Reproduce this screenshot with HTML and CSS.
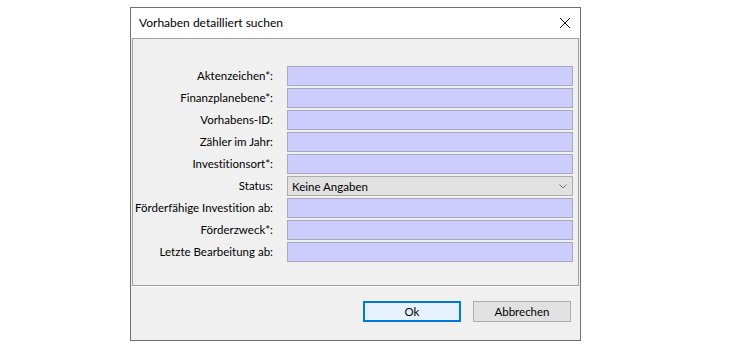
FILE: index.html
```html
<!DOCTYPE html>
<html lang="de">
<head>
    <meta charset="UTF-8">
    <title>Vorhaben detailliert suchen</title>
    <link rel="stylesheet" href="styles.css">
</head>
<body>

<div class="dialog">
    <div class="title-bar">
        <span class="title">Vorhaben detailliert suchen</span>
        <svg class="close" width="12" height="12" viewBox="0 0 12 12">
            <path d="M1 1 L11 11 M11 1 L1 11" stroke="#111" stroke-width="1" fill="none"/>
        </svg>
    </div>

    <div class="panel">
        <div class="form">
            <label>Aktenzeichen*:</label>
            <div class="field"></div>

            <label>Finanzplanebene*:</label>
            <div class="field"></div>

            <label>Vorhabens-ID:</label>
            <div class="field"></div>

            <label>Zähler im Jahr:</label>
            <div class="field"></div>

            <label>Investitionsort*:</label>
            <div class="field"></div>

            <label>Status:</label>
            <div class="combo">
                <span>Keine Angaben</span>
                <svg width="8" height="5" viewBox="0 0 8 5">
                    <path d="M0.5 0.5 L4 4 L7.5 0.5" stroke="#707070" stroke-width="1" fill="none"/>
                </svg>
            </div>

            <label>Förderfähige Investition ab:</label>
            <div class="field"></div>

            <label>Förderzweck*:</label>
            <div class="field"></div>

            <label>Letzte Bearbeitung ab:</label>
            <div class="field"></div>
        </div>
    </div>

    <div class="buttons">
        <button class="btn default">Ok</button>
        <button class="btn">Abbrechen</button>
    </div>
</div>

</body>
</html>
```

FILE: styles.css
```css
body {
    margin: 0;
    padding: 0;
    background: #fff;
    font-family: 'Lato', sans-serif;
    font-size: 11.5px;
    font-variant-ligatures: none;
    color: #000;
}

.dialog {
    box-sizing: border-box;
    width: 451px;
    height: 334px;
    margin: 7px 0 0 130px;
    border: 1px solid #707070;
    background: #f0f0f0;
    display: flex;
    flex-direction: column;
}

.title-bar {
    height: 30px;
    background: #fff;
    display: flex;
    align-items: center;
    justify-content: space-between;
    padding: 0 9px 0 8px;
}

.title {
    font-size: 12px;
    line-height: 16px;
}

.panel {
    margin: 0 1px;
    border: 1px solid #a0a0a0;
    box-shadow: 0 1px 0 #fff;
    padding: 27px 0 23px;
}

.form {
    display: grid;
    grid-template-columns: 140px 286px;
    grid-auto-rows: 20px;
    column-gap: 14px;
    row-gap: 2px;
}

.form label {
    text-align: right;
    line-height: 20px;
    white-space: nowrap;
}

.field {
    box-sizing: border-box;
    background: #ccccff;
    border: 1px solid #a8a8b8;
}

.combo {
    box-sizing: border-box;
    background: #e1e1e1;
    border: 1px solid #adadad;
    display: flex;
    align-items: center;
    justify-content: space-between;
    padding: 0 5px 0 4px;
}

.buttons {
    flex: 1;
    display: flex;
    justify-content: flex-end;
    align-items: flex-start;
    gap: 12px;
    padding: 15px 9px 0 0;
}

.btn {
    box-sizing: border-box;
    width: 98px;
    height: 21px;
    font-family: inherit;
    font-size: 11.5px;
    font-variant-ligatures: none;
    color: #000;
    background: #e1e1e1;
    border: 1px solid #adadad;
    padding: 0;
}

.btn.default {
    background: #e5f1fb;
    border: 1px solid #0078d7;
    box-shadow: inset 0 0 0 1px #0078d7;
}
```
